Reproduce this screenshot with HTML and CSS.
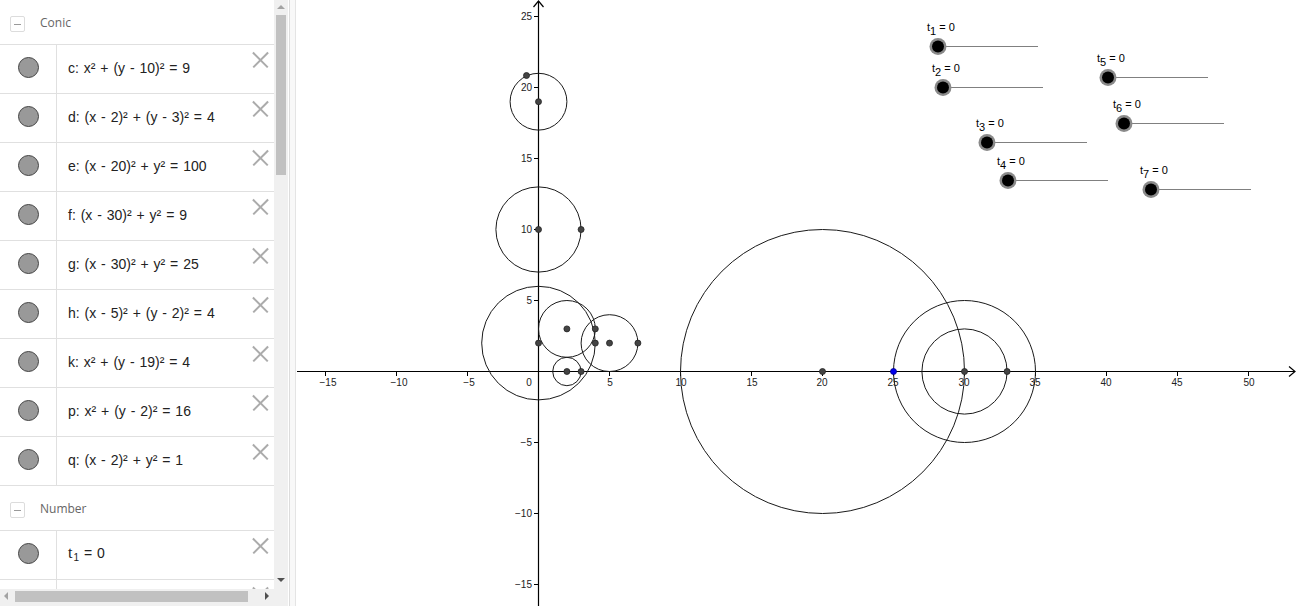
FILE: index.html
```html
<!DOCTYPE html>
<html>
<head>
<meta charset="utf-8">
<link rel="stylesheet" href="styles.css">
</head>
<body>
<div class="app">
  <div class="algebra">
    <div class="list">
      <div class="group-header"><span class="collapse"></span><span class="group-name">Conic</span></div>
      <div class="row"><div class="marble-cell"><span class="marble"></span></div><div class="formula"><span>c: x² + (y - 10)² = 9</span></div><span class="close"></span></div>
      <div class="row"><div class="marble-cell"><span class="marble"></span></div><div class="formula"><span>d: (x - 2)² + (y - 3)² = 4</span></div><span class="close"></span></div>
      <div class="row"><div class="marble-cell"><span class="marble"></span></div><div class="formula"><span>e: (x - 20)² + y² = 100</span></div><span class="close"></span></div>
      <div class="row"><div class="marble-cell"><span class="marble"></span></div><div class="formula"><span>f: (x - 30)² + y² = 9</span></div><span class="close"></span></div>
      <div class="row"><div class="marble-cell"><span class="marble"></span></div><div class="formula"><span>g: (x - 30)² + y² = 25</span></div><span class="close"></span></div>
      <div class="row"><div class="marble-cell"><span class="marble"></span></div><div class="formula"><span>h: (x - 5)² + (y - 2)² = 4</span></div><span class="close"></span></div>
      <div class="row"><div class="marble-cell"><span class="marble"></span></div><div class="formula"><span>k: x² + (y - 19)² = 4</span></div><span class="close"></span></div>
      <div class="row"><div class="marble-cell"><span class="marble"></span></div><div class="formula"><span>p: x² + (y - 2)² = 16</span></div><span class="close"></span></div>
      <div class="row"><div class="marble-cell"><span class="marble"></span></div><div class="formula"><span>q: (x - 2)² + y² = 1</span></div><span class="close"></span></div>
      <div class="group-header"><span class="collapse"></span><span class="group-name">Number</span></div>
      <div class="row"><div class="marble-cell"><span class="marble"></span></div><div class="formula"><span><span class="tvar">t</span><sub>1</sub> = 0</span></div><span class="close"></span></div>
      <div class="row"><div class="marble-cell"><span class="marble"></span></div><div class="formula"></div><span class="close"></span></div>
    </div>
    <div class="vscroll">
      <span class="arrow-up"></span>
      <div class="vthumb"></div>
      <span class="arrow-down"></span>
    </div>
    <div class="hscroll">
      <span class="arrow-left"></span>
      <div class="hthumb"></div>
      <span class="arrow-right"></span>
    </div>
    <div class="corner"></div>
  </div>
  <div class="splitter"></div>
  <div class="graphics">
    <svg class="canvas" width="999" height="606" viewBox="297 0 999 606" xmlns="http://www.w3.org/2000/svg">
      <g class="axes" stroke="#000" stroke-width="1.2" fill="none">
        <line x1="297" y1="371.5" x2="1295" y2="371.5"/>
        <polyline points="1289,366.5 1295,371.5 1289,376.5"/>
        <line x1="538.5" y1="1" x2="538.5" y2="606"/>
        <polyline points="533.5,7 538.5,1 543.5,7"/>
      </g>
      <g class="ticks" stroke="#000" stroke-width="1">
        <line x1="325.5" y1="371" x2="325.5" y2="376"/>
        <line x1="396.5" y1="371" x2="396.5" y2="376"/>
        <line x1="467.5" y1="371" x2="467.5" y2="376"/>
        <line x1="609.5" y1="371" x2="609.5" y2="376"/>
        <line x1="680.5" y1="371" x2="680.5" y2="376"/>
        <line x1="751.5" y1="371" x2="751.5" y2="376"/>
        <line x1="822.5" y1="371" x2="822.5" y2="376"/>
        <line x1="893.5" y1="371" x2="893.5" y2="376"/>
        <line x1="964.5" y1="371" x2="964.5" y2="376"/>
        <line x1="1035.5" y1="371" x2="1035.5" y2="376"/>
        <line x1="1106.5" y1="371" x2="1106.5" y2="376"/>
        <line x1="1177.5" y1="371" x2="1177.5" y2="376"/>
        <line x1="1248.5" y1="371" x2="1248.5" y2="376"/>
        <line x1="534" y1="16.5" x2="538" y2="16.5"/>
        <line x1="534" y1="87.5" x2="538" y2="87.5"/>
        <line x1="534" y1="158.5" x2="538" y2="158.5"/>
        <line x1="534" y1="229.5" x2="538" y2="229.5"/>
        <line x1="534" y1="300.5" x2="538" y2="300.5"/>
        <line x1="534" y1="442.5" x2="538" y2="442.5"/>
        <line x1="534" y1="513.5" x2="538" y2="513.5"/>
        <line x1="534" y1="584.5" x2="538" y2="584.5"/>
      </g>
      <g class="xlabels" text-anchor="middle">
        <text x="328" y="386">−15</text>
        <text x="399" y="386">−10</text>
        <text x="469" y="386">−5</text>
        <text x="529" y="386">0</text>
        <text x="610" y="386">5</text>
        <text x="681" y="386">10</text>
        <text x="752" y="386">15</text>
        <text x="822" y="386">20</text>
        <text x="893" y="386">25</text>
        <text x="964" y="386">30</text>
        <text x="1035" y="386">35</text>
        <text x="1106" y="386">40</text>
        <text x="1177" y="386">45</text>
        <text x="1249" y="386">50</text>
      </g>
      <g class="ylabels" text-anchor="end">
        <text x="532" y="19.5">25</text>
        <text x="532" y="90.5">20</text>
        <text x="532" y="161.5">15</text>
        <text x="532" y="232.5">10</text>
        <text x="532" y="303.5">5</text>
        <text x="532" y="445.5">−5</text>
        <text x="532" y="516.5">−10</text>
        <text x="532" y="587.5">−15</text>
      </g>
      <g class="conics" stroke="#1a1a1a" stroke-width="1" fill="none">
        <circle cx="538.5" cy="229.5" r="42.6"/>
        <circle cx="566.9" cy="328.9" r="28.4"/>
        <circle cx="822.5" cy="371.5" r="142"/>
        <circle cx="964.5" cy="371.5" r="42.6"/>
        <circle cx="964.5" cy="371.5" r="71"/>
        <circle cx="609.5" cy="343.1" r="28.4"/>
        <circle cx="538.5" cy="101.7" r="28.4"/>
        <circle cx="538.5" cy="343.1" r="56.8"/>
        <circle cx="566.9" cy="371.5" r="14.2"/>
      </g>
      <g class="points" fill="#444" stroke="#222" stroke-width="0.8">
        <circle cx="538.5" cy="229.5" r="3"/>
        <circle cx="581.1" cy="229.5" r="3"/>
        <circle cx="538.5" cy="101.7" r="3"/>
        <circle cx="526.5" cy="75.5" r="3"/>
        <circle cx="566.9" cy="328.9" r="3"/>
        <circle cx="595.3" cy="328.9" r="3"/>
        <circle cx="538.5" cy="343.1" r="3"/>
        <circle cx="595.3" cy="343.1" r="3"/>
        <circle cx="609.5" cy="343.1" r="3"/>
        <circle cx="637.9" cy="343.1" r="3"/>
        <circle cx="566.9" cy="371.5" r="3"/>
        <circle cx="581.1" cy="371.5" r="3"/>
        <circle cx="822.5" cy="371.5" r="3"/>
        <circle cx="964.5" cy="371.5" r="3"/>
        <circle cx="1007.1" cy="371.5" r="3"/>
        <circle cx="893.5" cy="371.5" r="3" fill="#0000ee" stroke="#000088"/>
      </g>
      <g class="sliders">
        <g transform="translate(938,46.5)">
          <line x1="0" y1="0" x2="100" y2="0" class="track"/>
          <circle r="8.5" class="knob-ring"/><circle r="6" class="knob"/>
          <text x="-11" y="-16">t<tspan dy="4">1</tspan><tspan dy="-4"> = 0</tspan></text>
        </g>
        <g transform="translate(943,87.5)">
          <line x1="0" y1="0" x2="100" y2="0" class="track"/>
          <circle r="8.5" class="knob-ring"/><circle r="6" class="knob"/>
          <text x="-11" y="-16">t<tspan dy="4">2</tspan><tspan dy="-4"> = 0</tspan></text>
        </g>
        <g transform="translate(987,142.5)">
          <line x1="0" y1="0" x2="100" y2="0" class="track"/>
          <circle r="8.5" class="knob-ring"/><circle r="6" class="knob"/>
          <text x="-11" y="-16">t<tspan dy="4">3</tspan><tspan dy="-4"> = 0</tspan></text>
        </g>
        <g transform="translate(1008,180.5)">
          <line x1="0" y1="0" x2="100" y2="0" class="track"/>
          <circle r="8.5" class="knob-ring"/><circle r="6" class="knob"/>
          <text x="-11" y="-16">t<tspan dy="4">4</tspan><tspan dy="-4"> = 0</tspan></text>
        </g>
        <g transform="translate(1108,77.5)">
          <line x1="0" y1="0" x2="100" y2="0" class="track"/>
          <circle r="8.5" class="knob-ring"/><circle r="6" class="knob"/>
          <text x="-11" y="-16">t<tspan dy="4">5</tspan><tspan dy="-4"> = 0</tspan></text>
        </g>
        <g transform="translate(1124,123.5)">
          <line x1="0" y1="0" x2="100" y2="0" class="track"/>
          <circle r="8.5" class="knob-ring"/><circle r="6" class="knob"/>
          <text x="-11" y="-16">t<tspan dy="4">6</tspan><tspan dy="-4"> = 0</tspan></text>
        </g>
        <g transform="translate(1151,189.5)">
          <line x1="0" y1="0" x2="100" y2="0" class="track"/>
          <circle r="8.5" class="knob-ring"/><circle r="6" class="knob"/>
          <text x="-11" y="-16">t<tspan dy="4">7</tspan><tspan dy="-4"> = 0</tspan></text>
        </g>
      </g>
    </svg>
  </div>
</div>
</body>
</html>
```
FILE: styles.css
```css
html, body {
  margin: 0;
  padding: 0;
  width: 1296px;
  height: 606px;
  overflow: hidden;
  background: #fff;
  font-family: "Liberation Sans", Arial, sans-serif;
}

.app {
  display: flex;
  width: 1296px;
  height: 606px;
}

.algebra {
  width: 288px;
  height: 606px;
  display: grid;
  grid-template-columns: 274px 14px;
  grid-template-rows: 589px 17px;
  background: #fff;
}

.list {
  overflow: hidden;
}

.group-header {
  height: 44px;
  border-bottom: 1px solid #e0e0e0;
  display: flex;
  align-items: center;
  padding-left: 10px;
}

.collapse {
  width: 13px;
  height: 14px;
  border: 1px solid #dcdcdc;
  border-radius: 2px;
  position: relative;
  margin-top: 4px;
  margin-right: 15px;
}

.collapse::after {
  content: "";
  position: absolute;
  left: 3px;
  top: 7px;
  width: 7px;
  height: 1px;
  background: #9a9a9a;
}

.group-name {
  font-family: "Open Sans", "Liberation Sans", sans-serif;
  font-size: 12px;
  color: #666;
  margin-top: 1px;
}

.row {
  height: 48px;
  border-bottom: 1px solid #e0e0e0;
  display: flex;
  align-items: stretch;
  position: relative;
}

.marble-cell {
  width: 56px;
  border-right: 1px solid #e0e0e0;
  display: flex;
  align-items: center;
  justify-content: center;
}

.marble {
  width: 21px;
  height: 21px;
  border-radius: 50%;
  background: #999;
  border: 1px solid #444;
  box-sizing: border-box;
  margin-left: 1px;
  margin-bottom: 3px;
}

.formula {
  display: flex;
  align-items: center;
  padding-left: 11px;
  padding-bottom: 3px;
  font-size: 14px;
  word-spacing: 1px;
  color: #222;
  white-space: nowrap;
}

.formula sub {
  font-size: 10px;
  vertical-align: -3px;
  margin-left: 1px;
}

.tvar {
  font-family: "Liberation Serif", "Times New Roman", serif;
  font-size: 16px;
}

.close {
  position: absolute;
  left: 252px;
  top: 7px;
  width: 16px;
  height: 16px;
}

.close::before,
.close::after {
  content: "";
  position: absolute;
  left: -2px;
  top: 7px;
  width: 21px;
  height: 1.5px;
  background: #ababab;
  transform: rotate(45deg);
}

.close::after {
  transform: rotate(-45deg);
}

.vscroll {
  background: #f0f0f0;
  position: relative;
}

.vthumb {
  position: absolute;
  left: 2px;
  right: 2px;
  top: 15px;
  height: 160px;
  background: #c1c1c1;
}

.arrow-up,
.arrow-down {
  position: absolute;
  left: 3px;
  width: 0;
  height: 0;
  border-left: 4px solid transparent;
  border-right: 4px solid transparent;
}

.arrow-up {
  top: 5px;
  border-bottom: 4px solid #a3a3a3;
}

.arrow-down {
  top: 578px;
  border-top: 4px solid #505050;
}

.hscroll {
  background: #f0f0f0;
  position: relative;
}

.hthumb {
  position: absolute;
  left: 15px;
  width: 233px;
  top: 2px;
  height: 11px;
  background: #c1c1c1;
}

.arrow-left,
.arrow-right {
  position: absolute;
  top: 3px;
  width: 0;
  height: 0;
  border-top: 4px solid transparent;
  border-bottom: 4px solid transparent;
}

.arrow-left {
  left: 4px;
  border-right: 4px solid #a3a3a3;
}

.arrow-right {
  left: 265px;
  border-left: 4px solid #505050;
}

.corner {
  background: #f0f0f0;
}

.splitter {
  width: 5px;
  margin-left: 1px;
  background: #f8f8f8;
  border-left: 1px solid #dcdcdc;
  border-right: 1px solid #e4e4e4;
  margin-right: 1px;
}

.graphics {
  width: 999px;
  height: 606px;
  overflow: hidden;
}

.canvas {
  display: block;
}

.xlabels text,
.ylabels text {
  font-family: "Liberation Sans", Arial, sans-serif;
  font-size: 10px;
  fill: #222;
}

.sliders text {
  font-family: "Liberation Sans", Arial, sans-serif;
  font-size: 11px;
  fill: #000;
}

.track {
  stroke: #808080;
  stroke-width: 1;
}

.knob-ring {
  fill: #8a8a8a;
}

.knob {
  fill: #000;
}
```
